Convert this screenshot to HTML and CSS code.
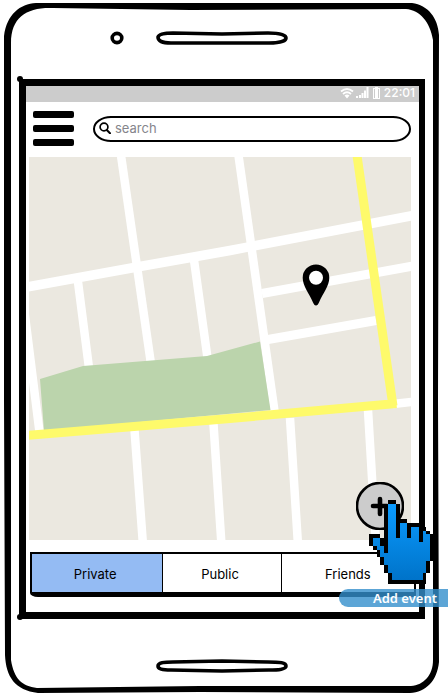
FILE: index.html
```html
<!DOCTYPE html>
<html lang="en">
<head>
<meta charset="utf-8">
<meta name="viewport" content="width=device-width, initial-scale=1">
<title>Event map</title>
<link rel="stylesheet" href="styles.css">
</head>
<body>
<div class="phone">
  <svg class="phone-frame" viewBox="0 0 448 696" preserveAspectRatio="none" aria-hidden="true">
    <path fill="#000" fill-rule="evenodd" d="M36 3H412C428 5 438 18 439 35L438 400L439 662C437 681 426 692 410 693L200 692L38 693C15 690 6 677 5 655L4 400V36C7 14 20 4 36 3ZM53 8C27 7 11 17 11 43L11 200L11 400L11 660C14 679 22 686 37 688L200 686L411 686C424 685 433 675 433 660V40C430 22 420 10 406 9L190 10Z"/>
  </svg>
  <div class="phone-top">
    <svg class="camera" viewBox="0 0 14 14" aria-hidden="true"><ellipse cx="7" cy="7" rx="4.8" ry="4.6" fill="#fff" stroke="#000" stroke-width="3.6"/></svg>
    <svg class="speaker" viewBox="0 0 132 14" aria-hidden="true"><path d="M17 2L66 3L112 2C124 2 130 4 130 7C130 10 123 12 113 12H15C6 12 2 10 2 6C3 3 8 2 17 2Z" fill="#fff" stroke="#000" stroke-width="3.6"/></svg>
  </div>

  <main class="screen">
    <div class="status-bar">
      <svg class="wifi" viewBox="0 0 14 12" aria-hidden="true"><g fill="none" stroke="#fff" stroke-width="1.9"><path d="M1 4.5Q7-.5 13 4.5"/><path d="M3 7Q7 3.700 11 7"/></g><path d="M4.500 8.500Q7 6.500 9.500 8.500L7 11.500Z" fill="#fff"/></svg>
      <svg class="signal" viewBox="0 0 13 12" aria-hidden="true"><path d="M0 9h2v2H0zM3 8h2v3H3zM5.500 6h2v5h-2zM8 3.500h2V11H8zM10.500 0h2v11h-2z" fill="#fff"/></svg>
      <svg class="battery" viewBox="0 0 7 12" aria-hidden="true"><path d="M2 0h3v1h2v11H0V1h2z" fill="#fff"/><path d="M1.500 2v9M5.500 2v9" stroke="#ccc"/></svg>
      <span class="clock">22:01</span>
    </div>

    <header class="toolbar">
      <button class="menu" type="button" aria-label="Menu"><span></span><span></span><span></span></button>
      <label class="search">
        <svg viewBox="0 0 12 12" aria-hidden="true"><circle cx="5" cy="5" r="3.900" fill="none" stroke="#000" stroke-width="1.700"/><path d="M7.800 8L11 11.200" stroke="#000" stroke-width="2" stroke-linecap="round"/></svg>
        <input type="search" placeholder="search" aria-label="Search">
      </label>
    </header>

    <section class="map" aria-label="Map">
      <svg class="streets" viewBox="29 157 382 383" preserveAspectRatio="none" aria-hidden="true">
        <rect x="29" y="157" width="382" height="383" fill="#ebe8e0"/>
        <g fill="none" stroke="#fff" stroke-width="8.500">
          <path d="M120.500 152L151 364"/>
          <path d="M238 152L274.500 411"/>
          <path d="M24 287.500L137 267L230 250.500L416 215" stroke-width="9.500"/>
          <path d="M78 282L89 368M194 260L207.500 358M24.500 312L39.500 432"/>
          <path d="M262 293.500L416 265.500M268 339.500L376 320.500" stroke-width="9.200"/>
          <path d="M134.500 430L143 545M213.500 424L221.500 545M290 418L298 545M368 410L376 545"/>
          <path d="M393 404L416 401.500"/>
        </g>
        <path d="M40 379L83 366L207 356L260 341.500L270.500 410L44 431Z" fill="#bbd4ac"/>
        <path d="M24 435.700L230 418.500L396.500 403.500M356.500 152L393 406" fill="none" stroke="#fefa6b" stroke-width="9"/>
        <path d="M316 305.500C314.500 305.500 314 304.500 313 302.500C309 293 302.700 286 302.700 277.700A13.300 13.300 0 0 1 329.300 277.700C329.300 286 323 293 319 302.500C318 304.500 317.500 305.500 316 305.500Z"/>
        <circle cx="316" cy="277.700" r="7" fill="#fff"/>
      </svg>
      <div class="add">
        <button class="add-button" type="button" aria-label="Add event">
          <svg viewBox="0 0 48 48" aria-hidden="true"><circle cx="24" cy="24" r="23" fill="#ccc" stroke="#000" stroke-width="2.600"/><path d="M17 24H31M24 17V32" stroke="#000" stroke-width="4.600" stroke-linecap="round"/></svg>
        </button>
        <svg class="hand" viewBox="0 0 17 22" preserveAspectRatio="none" shape-rendering="crispEdges" aria-hidden="true">
          <defs><linearGradient id="skin" x1="0" y1="0" x2="0" y2="1"><stop offset="0" stop-color="#0a9bff"/><stop offset="1" stop-color="#0073c9"/></linearGradient></defs>
          <path fill="url(#skin)" d="M5 1H7V6H10V7H13V8H15V9H16V16H15V19H14V21H6V19H5V17H4V15H3V13H2V12H1V10H3V12H4V14H5Z"/>
          <path d="M5 0h2v1h-2zM4 1h1v13h-1zM7 1h1v9h-1zM8 5h2v1h-2zM10 6h1v4h-1zM11 6h2v1h-2zM13 7h1v4h-1zM14 7h1v1h-1zM15 8h1v1h-1zM16 9h1v7h-1zM15 16h1v3h-1zM14 19h1v3h-1zM5 21h10v1h-10zM5 19h1v2h-1zM4 17h1v2h-1zM3 15h1v2h-1zM2 13h1v2h-1zM1 12h1v1h-1zM0 9h1v3h-1zM1 9h2v1h-2zM3 10h1v2h-1z"/>
        </svg>
        <span class="tooltip">Add event</span>
      </div>
    </section>

    <nav class="tabs" aria-label="Event filter">
      <button class="tab active" type="button">Private</button>
      <button class="tab" type="button">Public</button>
      <button class="tab" type="button">Friends</button>
    </nav>
  </main>

  <div class="phone-bottom">
    <svg class="speaker" viewBox="0 0 132 14" aria-hidden="true"><path d="M17 3L66 2L112 3C124 3 130 4 130 7C130 10 123 11 113 11L66 12L15 11C6 11 2 10 2 7C2 4 8 3 17 3Z" fill="#fff" stroke="#000" stroke-width="3.600"/></svg>
  </div>
</div>
</body>
</html>
```
FILE: styles.css
```css
* {
  box-sizing: border-box;
}

body {
  margin: 0;
  background: #fff;
  color: #000;
  font-family: Inter, "Liberation Sans", sans-serif;
  font-size: 13px;
}

button {
  margin: 0;
  padding: 0;
  border: 0;
  background: none;
  color: inherit;
  font: inherit;
}

svg {
  display: block;
}

.phone {
  position: relative;
  display: flex;
  flex-direction: column;
  min-height: 100vh;
  padding: 0 23px 0 19px;
  overflow: hidden;
}

.phone-frame {
  position: absolute;
  inset: 0;
  width: 100%;
  height: 100%;
}

.phone-top,
.phone-bottom {
  position: relative;
  display: flex;
  justify-content: center;
}

.phone-top {
  gap: 32px;
  height: 79px;
  padding: 31px 47px 0 0;
}

.phone-bottom {
  height: 77px;
  padding-top: 40px;
}

.camera {
  width: 14px;
  height: 14px;
}

.speaker {
  width: 132px;
  height: 14px;
}

.screen {
  position: relative;
  display: flex;
  flex: 1;
  flex-direction: column;
  border: solid #000;
  border-width: 7px 6px 7px 7px;
  background: #fff;
}

.screen::before,
.screen::after {
  content: "";
  position: absolute;
  left: -9px;
  width: 6px;
  height: 6px;
  border-radius: 3px;
  background: #000;
}

.screen::before {
  top: -10px;
}

.screen::after {
  bottom: -8px;
}

.status-bar {
  display: flex;
  align-items: center;
  justify-content: flex-end;
  height: 16px;
  padding: 0 4px 3px 0;
  background: #ccc;
  color: #fff;
}

.wifi {
  width: 14px;
  height: 12px;
  margin-right: 2px;
}

.signal {
  width: 13px;
  height: 12px;
  margin-right: 4px;
}

.battery {
  width: 7px;
  height: 12px;
  margin-right: 4px;
}

.clock {
  font-size: 12px;
  font-weight: 500;
  line-height: 12px;
}

.toolbar {
  display: flex;
  align-items: center;
  gap: 19px;
  height: 55px;
  padding: 0 8px 2px 7px;
}

.menu {
  display: flex;
  flex-direction: column;
  gap: 7px;
  width: 41px;
}

.menu span {
  height: 7px;
  border-radius: 2px;
  background: #000;
}

.search {
  display: flex;
  flex: 1;
  align-items: center;
  gap: 4px;
  height: 26px;
  padding: 0 0 2px 4px;
  border: 2px solid #000;
  border-radius: 18px / 13px;
}

.search svg {
  width: 12px;
  height: 12px;
}

.search input {
  flex: 1;
  min-width: 0;
  padding: 0;
  border: 0;
  outline: 0;
  background: none;
  font: inherit;
}

.search input::placeholder {
  color: #85858c;
  opacity: 1;
}

.map {
  position: relative;
  z-index: 1;
  flex: 1;
  min-height: 383px;
  margin: 0 8px 0 3px;
}

.streets {
  position: absolute;
  width: 100%;
  height: 100%;
}

.add {
  position: absolute;
  right: 7px;
  bottom: 10px;
  width: 48px;
  height: 48px;
}

.add-button,
.add-button svg {
  display: block;
  width: 48px;
  height: 48px;
}

.hand {
  position: absolute;
  top: 18px;
  left: 13px;
  width: 65px;
  height: 84px;
  pointer-events: none;
}

.tooltip {
  position: absolute;
  top: 107px;
  left: -17px;
  width: 109px;
  padding-right: 11px;
  border-radius: 9px 0 0 9px;
  background: rgba(51, 142, 204, 0.8);
  color: #fff;
  font-family: "Noto Sans", sans-serif;
  font-weight: 600;
  line-height: 18px;
  text-align: right;
}

.tabs {
  display: grid;
  grid-template-columns: 131fr 119fr 134fr;
  height: 45px;
  margin: 12px 3px 15px 4px;
  border: solid #000;
  border-width: 2px 2px 5px;
  border-radius: 0 0 2px 8px / 0 0 2px 4px;
}

.tab {
  padding: 2px 4px 0 0;
}

.tab:last-child {
  padding-right: 0;
}

.tab + .tab {
  border-left: 1px solid #000;
}

.tab.active {
  background: #94bbf3;
}
```
